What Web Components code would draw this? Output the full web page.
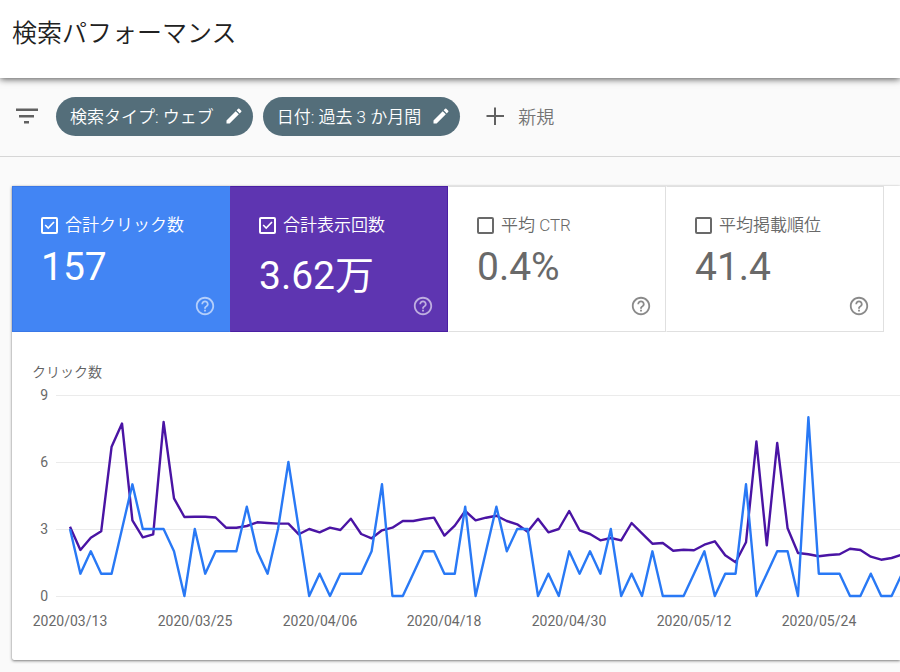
<!DOCTYPE html>
<html lang="ja">
<head>
<meta charset="utf-8">
<meta name="viewport" content="width=device-width, initial-scale=1">
<title>検索パフォーマンス</title>
<style>
  body {
    margin: 0;
    background: #fafafa;
    color: #212121;
    font-family: Roboto, "Noto Sans CJK JP", sans-serif;
  }
</style>
</head>
<body>
<performance-page>
  <page-header slot="header">検索パフォーマンス</page-header>
  <filter-bar slot="filters">
    <filter-chip>検索タイプ: ウェブ</filter-chip>
    <filter-chip>日付: 過去 3 か月間</filter-chip>
  </filter-bar>
  <metric-tile slot="metrics" label="合計クリック数" value="157" color="blue" checked></metric-tile>
  <metric-tile slot="metrics" label="合計表示回数" value="3.62万" color="purple" checked></metric-tile>
  <metric-tile slot="metrics" label="平均 CTR" value="0.4%"></metric-tile>
  <metric-tile slot="metrics" label="平均掲載順位" value="41.4"></metric-tile>
  <performance-chart slot="chart">クリック数</performance-chart>
</performance-page>

<script>
// Page frame: header, filters and the report card
class PerformancePage extends HTMLElement {
  constructor() {
    super();
    const root = this.attachShadow({ mode: 'open' });
    root.innerHTML = `
      <style>
        :host {
          display: block;
          overflow-x: hidden;
        }
        main {
          padding: 29px 0 12px 12px;
        }
        .card {
          background: #fff;
          border-radius: 0 0 0 2px;
          box-shadow: 0 1px 3px rgba(0,0,0,.5), 0 0 1px rgba(0,0,0,.2);
          overflow: hidden;
        }
        .metrics {
          display: grid;
          grid-template-columns: repeat(4, 1fr);
          padding-right: 16px;
        }
      </style>
      <slot name="header"></slot>
      <slot name="filters"></slot>
      <main>
        <div class="card">
          <div class="metrics"><slot name="metrics"></slot></div>
          <slot name="chart"></slot>
        </div>
      </main>
    `;
  }
}
customElements.define('performance-page', PerformancePage);

class PageHeader extends HTMLElement {
  constructor() {
    super();
    const root = this.attachShadow({ mode: 'open' });
    root.innerHTML = `
      <style>
        :host {
          display: block;
          position: relative;
          background: #fff;
          box-shadow: 0 1px 7px rgba(0,0,0,.7);
        }
        h1 {
          margin: 0;
          padding: 14px 12px 24px;
          font-size: 25px;
          line-height: 40px;
          font-weight: 350;
        }
      </style>
      <header><h1><slot></slot></h1></header>
    `;
  }
}
customElements.define('page-header', PageHeader);

class FilterBar extends HTMLElement {
  constructor() {
    super();
    const root = this.attachShadow({ mode: 'open' });
    root.innerHTML = `
      <style>
        :host {
          display: flex;
          align-items: center;
          gap: 10px;
          padding: 19px 16px 20px;
          border-bottom: 1px solid #d6d6d6;
        }
        button {
          display: flex;
          align-items: center;
          padding: 0 0 2px;
          border: 0;
          background: none;
          color: #757575;
          font: inherit;
          font-size: 18px;
          font-weight: 350;
          cursor: pointer;
        }
        .filter {
          margin-right: 8px;
        }
        .add {
          gap: 12px;
          margin-left: 14px;
        }
        svg {
          display: block;
          fill: #616161;
        }
      </style>
      <button class="filter" aria-label="フィルタ">
        <svg width="22" height="22" viewBox="0 0 22 22"><path d="M0 3.500h22v2.500H0zM3 10h15v2.500H3zM8 16h5v2.500H8z"/></svg>
      </button>
      <slot></slot>
      <button class="add">
        <svg width="22" height="22" viewBox="0 0 22 22"><path d="M10 2.500h2v7.500h8v2h-8v8h-2v-8H2.500v-2H10z"/></svg>
        新規
      </button>
    `;
  }
}
customElements.define('filter-bar', FilterBar);

class FilterChip extends HTMLElement {
  constructor() {
    super();
    const root = this.attachShadow({ mode: 'open' });
    root.innerHTML = `
      <style>
        :host {
          display: block;
        }
        button {
          display: flex;
          align-items: center;
          gap: 10px;
          height: 39px;
          padding: 0 9px 2px 14px;
          border: 0;
          border-radius: 20px;
          background: #546e7a;
          color: #fff;
          font: inherit;
          font-size: 17px;
          font-weight: 350;
          white-space: nowrap;
          cursor: pointer;
        }
        svg {
          display: block;
          fill: #fff;
        }
      </style>
      <button>
        <slot></slot>
        <svg width="20" height="20" viewBox="0 0 24 24"><path d="M3 17.25V21h3.75L17.81 9.94l-3.75-3.75L3 17.25zM20.71 7.04a1 1 0 000-1.41l-2.34-2.34a1 1 0 00-1.41 0l-1.83 1.83 3.75 3.75 1.83-1.83z"/></svg>
      </button>
    `;
  }
}
customElements.define('filter-chip', FilterChip);

// Selectable metric with its total
class MetricTile extends HTMLElement {
  constructor() {
    super();
    const root = this.attachShadow({ mode: 'open' });
    root.innerHTML = `
      <style>
        :host {
          display: flex;
          flex-direction: column;
          box-sizing: border-box;
          min-height: 146px;
          padding: 26px 13px 14px 28px;
          border: 1px solid #e0e0e0;
          border-left-color: transparent;
          color: #696969;
        }
        :host([color="blue"]) {
          background: #4285f4;
          border-color: #3a78e7;
          border-right-color: #4285f4;
          color: #fff;
        }
        :host([color="purple"]) {
          background: #5e35b1;
          border-color: #4a1fa3;
          border-left-color: #5e35b1;
          color: #fff;
        }
        label {
          display: flex;
          align-items: center;
          gap: 7px;
          font-size: 17px;
          line-height: 24px;
          font-weight: 350;
          white-space: nowrap;
        }
        .box {
          display: grid;
        }
        .box > * {
          grid-area: 1 / 1;
        }
        input {
          appearance: none;
          width: 17px;
          height: 17px;
          margin: 0;
          border: 2px solid currentColor;
          border-radius: 2px;
          color: inherit;
        }
        .tick {
          visibility: hidden;
          fill: none;
          stroke: currentColor;
          stroke-width: 1.6;
          pointer-events: none;
        }
        input:checked + .tick {
          visibility: visible;
        }
        .total {
          display: flex;
          flex: 1;
          justify-content: space-between;
          align-items: flex-start;
          padding-top: 7px;
        }
        .value {
          font-size: 39px;
        }
        button {
          align-self: flex-end;
          padding: 0;
          border: 0;
          background: none;
          color: #8a8a8a;
          cursor: pointer;
        }
        :host([color]) button {
          color: rgba(255,255,255,.6);
        }
        button svg {
          display: block;
          fill: currentColor;
        }
      </style>
      <label>
        <span class="box">
          <input type="checkbox">
          <svg class="tick" width="17" height="17" viewBox="0 0 17 17"><path d="M4.200 8l3 3 5.800-6"/></svg>
        </span>
        <span class="label"></span>
      </label>
      <div class="total">
        <div class="value"></div>
        <button aria-label="ヘルプ">
          <svg width="22" height="22" viewBox="0 0 24 24"><path d="M11 18h2v-2h-2v2zm1-16C6.480 2 2 6.480 2 12s4.480 10 10 10 10-4.480 10-10S17.520 2 12 2zm0 18c-4.410 0-8-3.590-8-8s3.590-8 8-8 8 3.590 8 8-3.590 8-8 8zm0-14c-2.210 0-4 1.790-4 4h2c0-1.100.9-2 2-2s2 .9 2 2c0 2-3 1.750-3 5h2c0-2.250 3-2.500 3-5 0-2.210-1.790-4-4-4z"/></svg>
        </button>
      </div>
    `;
  }

  connectedCallback() {
    this.shadowRoot.querySelector('.label').textContent = this.getAttribute('label');
    this.shadowRoot.querySelector('.value').textContent = this.getAttribute('value');
    this.shadowRoot.querySelector('input').checked = this.hasAttribute('checked');
  }
}
customElements.define('metric-tile', MetricTile);

const CLICKS = [
  3, 1, 2, 1, 1, 3, 5, 3, 3, 3, 2, 0, 3, 1, 2, 2, 2, 4, 2, 1,
  3, 6, 3, 0, 1, 0, 1, 1, 1, 2, 5, 0, 0, 1, 2, 2, 1, 1, 4, 0,
  2, 4, 2, 3, 3, 0, 1, 0, 2, 1, 2, 1, 3, 0, 1, 0, 2, 0, 0, 0,
  1, 2, 0, 1, 1, 5, 0, 1, 2, 2, 0, 8, 1, 1, 1, 0, 0, 1, 0, 0, 1
];
const IMPRESSIONS = [
  693, 460, 583, 647, 1493, 1725, 757, 587, 617, 1740,
  977, 790, 793, 793, 785, 683, 683, 700, 737, 730,
  724, 724, 617, 670, 637, 683, 660, 773, 620, 577,
  657, 683, 750, 750, 770, 784, 604, 704, 850, 757,
  783, 803, 750, 717, 643, 773, 637, 670, 850, 657,
  620, 557, 580, 557, 730, 627, 523, 530, 453, 463,
  457, 513, 547, 407, 337, 537, 1545, 507, 1530, 677,
  430, 417, 397, 410, 417, 473, 460, 393, 363, 380, 413
];
const DATES = ['2020/03/13', '2020/03/25', '2020/04/06', '2020/04/18', '2020/04/30', '2020/05/12', '2020/05/24'];

class PerformanceChart extends HTMLElement {
  constructor() {
    super();
    const root = this.attachShadow({ mode: 'open' });
    root.innerHTML = `
      <style>
        :host {
          display: block;
          padding: 30px 0 0 20px;
          color: #616161;
        }
        h2 {
          margin: 0;
          font-size: 14px;
          line-height: 20px;
          font-weight: 350;
        }
        svg {
          display: block;
          width: 100%;
          height: 278px;
          overflow: visible;
        }
        text {
          fill: #696969;
          font-size: 14px;
        }
        .value {
          text-anchor: end;
        }
        .date {
          text-anchor: middle;
        }
        .grid {
          stroke: #ebebeb;
          shape-rendering: crispEdges;
        }
        polyline {
          fill: none;
          stroke-width: 2.4;
          stroke-linejoin: round;
        }
        .impressions { stroke: #4a14a4; }
        .clicks { stroke: #2979f5; }
      </style>
      <h2><slot></slot></h2>
      <svg role="img" aria-label="クリック数"></svg>
    `;
  }

  connectedCallback() {
    const left = 38;
    const base = 214;
    const height = 201;
    const step = 10.4;

    const line = (data, max) => data
      .map((v, i) => `${(left + i * step).toFixed(1)},${(base - v / max * height).toFixed(1)}`)
      .join(' ');

    const rows = [9, 6, 3, 0].map(v => {
      const y = Math.round(base - v / 9 * height);
      return `
        <line class="grid" x1="24" x2="100%" y1="${y}" y2="${y}"/>
        <text class="value" x="16" y="${y + 5}">${v}</text>`;
    }).join('');

    const dates = DATES.map((d, i) =>
      `<text class="date" x="${Math.round(left + i * 12 * step)}" y="244">${d}</text>`
    ).join('');

    this.shadowRoot.querySelector('svg').innerHTML = `
      ${rows}
      ${dates}
      <polyline class="impressions" points="${line(IMPRESSIONS, 2010)}"/>
      <polyline class="clicks" points="${line(CLICKS, 9)}"/>
    `;
  }
}
customElements.define('performance-chart', PerformanceChart);
</script>
</body>
</html>
